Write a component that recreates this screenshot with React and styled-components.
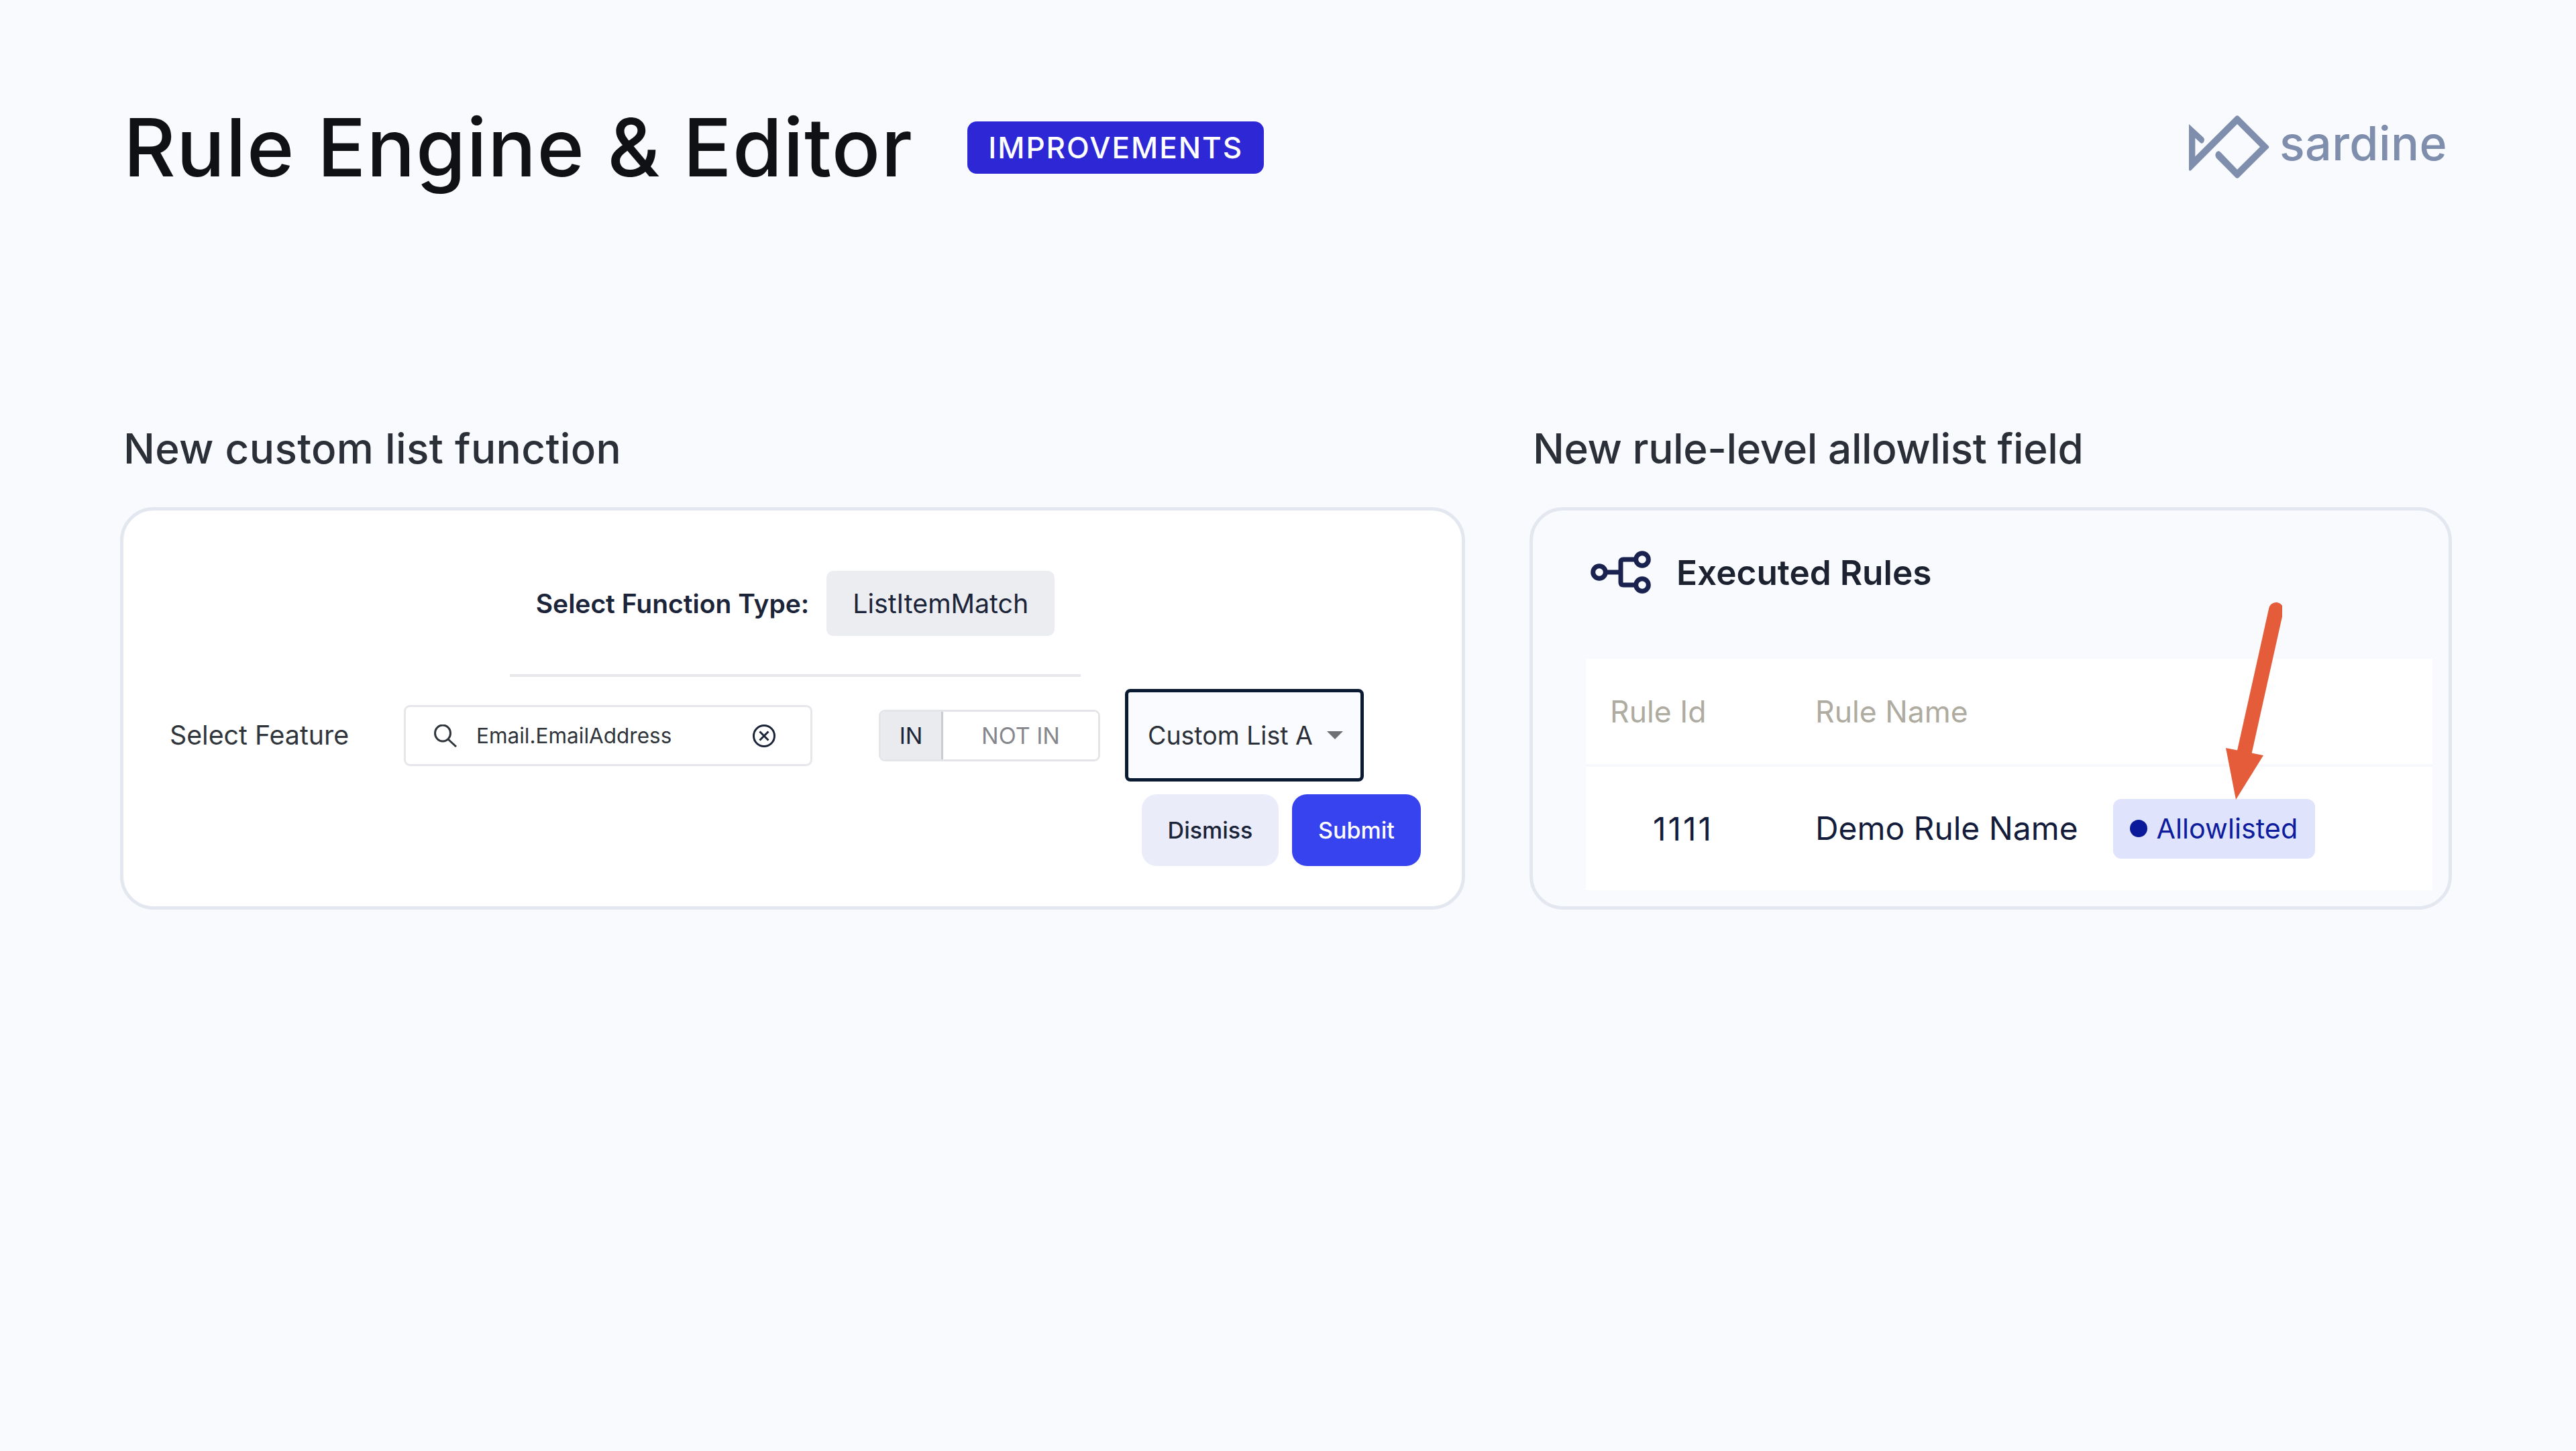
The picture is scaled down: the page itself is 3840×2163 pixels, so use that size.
import React from 'react';
import styled, { createGlobalStyle } from 'styled-components';

const GlobalStyle = createGlobalStyle`
  html, body {
    margin: 0;
    padding: 0;
    background: #f9fafe;
  }
  * {
    box-sizing: border-box;
  }
`;

const Page = styled.div`
  width: 3840px;
  height: 2163px;
  padding: 172px 185px 0 179px;
  background: #f9fafe;
  font-family: Inter, "Liberation Sans", sans-serif;
  color: #141c2e;
`;

const Header = styled.header`
  display: flex;
  align-items: center;
  height: 95px;
`;

const Title = styled.h1`
  margin: 0 0 0 5px;
  font-size: 120px;
  line-height: 95px;
  font-weight: 500;
  letter-spacing: 1.25px;
  color: #0f1114;
  white-space: nowrap;
`;

const Tag = styled.span`
  margin-left: 81px;
  display: flex;
  align-items: center;
  justify-content: center;
  width: 442px;
  height: 78px;
  background: #2e27d6;
  border-radius: 14px;
  color: #fff;
  font-size: 44px;
  font-weight: 500;
  letter-spacing: 2px;
`;

const Logo = styled.div`
  margin-left: auto;
  display: flex;
  align-items: center;
  gap: 9px;
  color: #7e8eac;
`;

const LogoName = styled.span`
  margin-right: 7px;
  padding-bottom: 12px;
  font-size: 70px;
  font-weight: 500;
  letter-spacing: 0.4px;
  line-height: 95px;
`;

const Columns = styled.main`
  margin-top: 364px;
  display: grid;
  grid-template-columns: 2005px 1375px;
  column-gap: 96px;
`;

const Heading = styled.h2`
  margin: 0 0 50px 5px;
  font-size: 62px;
  line-height: 75px;
  font-weight: 500;
  letter-spacing: ${(p) => p.$spacing};
  color: #2a2f38;
  white-space: nowrap;
`;

const Card = styled.section`
  position: relative;
  height: 600px;
  border: 5px solid #e3e7f0;
  border-radius: 50px;
  background: ${(p) => (p.$tinted ? '#f9fafe' : '#fff')};
`;

const FunctionRow = styled.div`
  display: flex;
  align-items: center;
  justify-content: center;
  gap: 26px;
  padding-top: 90px;
  margin-left: 8px;
`;

const BoldLabel = styled.span`
  font-size: 39px;
  font-weight: 600;
  color: #1b2438;
`;

const FunctionValue = styled.span`
  display: flex;
  align-items: center;
  justify-content: center;
  width: 340px;
  height: 97px;
  border-radius: 10px;
  background: #ebedf0;
  font-size: 39.3px;
  color: #1b2438;
`;

const Divider = styled.hr`
  width: 851px;
  height: 4px;
  margin: 57px 0 0 576px;
  border: 0;
  background: #e6e8ec;
`;

const FeatureRow = styled.div`
  display: flex;
  align-items: flex-start;
  padding: 18px 0 0 69px;
`;

const FeatureLabel = styled.span`
  width: 349px;
  padding-top: 45px;
  font-size: 39.3px;
  line-height: 48px;
  color: #30343b;
`;

const SearchBox = styled.div`
  margin-top: 24px;
  display: flex;
  align-items: center;
  width: 609px;
  height: 91px;
  padding: 0 52px 0 42px;
  border: 3px solid #e5e7eb;
  border-radius: 9px;
  font-size: 31.5px;
  color: #30343b;
`;

const SearchText = styled.span`
  margin: 0 auto 0 29px;
`;

const Toggle = styled.div`
  margin: 31px 0 0 99px;
  display: flex;
  width: 330px;
  height: 77px;
  border: 3px solid #e3e5e8;
  border-radius: 9px;
  overflow: hidden;
  font-size: 34px;
`;

const ToggleOption = styled.span`
  display: flex;
  align-items: center;
  justify-content: center;
  width: ${(p) => (p.$active ? '93px' : 'auto')};
  flex: ${(p) => (p.$active ? 'none' : 1)};
  background: ${(p) => (p.$active ? '#e9ebee' : '#fff')};
  border-right: ${(p) => (p.$active ? '3px solid #c9ccd1' : '0')};
  color: ${(p) => (p.$active ? '#1b2438' : '#85878c')};
`;

const Dropdown = styled.div`
  margin-left: 37px;
  display: flex;
  align-items: center;
  gap: 21px;
  width: 356px;
  height: 138px;
  padding-left: 29px;
  border: 5px solid #0a1a33;
  border-radius: 8px;
  background: #fafbfe;
  font-size: 37.5px;
  color: #2a2f38;
  white-space: nowrap;
`;

const Caret = styled.span`
  width: 0;
  height: 0;
  border-left: 12px solid transparent;
  border-right: 12px solid transparent;
  border-top: 12px solid #6e7074;
`;

const Actions = styled.div`
  display: flex;
  justify-content: flex-end;
  gap: 20px;
  margin-top: 19px;
  padding-right: 61px;
`;

const ActionButton = styled.button`
  width: ${(p) => (p.$primary ? '192px' : '204px')};
  height: 107px;
  border: 0;
  border-radius: 22px;
  background: ${(p) => (p.$primary ? '#3843f0' : '#eaecfa')};
  color: ${(p) => (p.$primary ? '#fff' : '#1b2438')};
  font-family: inherit;
  font-size: 34px;
  font-weight: 500;
`;

const RulesHead = styled.div`
  display: flex;
  align-items: center;
  gap: 38px;
  height: 221px;
  padding: 0 0 37px 86px;
`;

const RulesTitle = styled.span`
  font-size: 51.3px;
  font-weight: 600;
  color: #1d2230;
`;

const RulesTable = styled.div`
  margin: 0 24px 0 79px;
  background: #fff;
`;

const TableRow = styled.div`
  display: grid;
  grid-template-columns: 342px 1fr;
  align-items: center;
  height: ${(p) => (p.$head ? '161px' : '184px')};
  border-bottom: ${(p) => (p.$head ? '4px solid #f7f8fc' : '0')};
`;

const HeadCell = styled.span`
  padding-left: ${(p) => (p.$first ? '36px' : '0')};
  font-size: 44.5px;
  color: #aeaba0;
`;

const IdCell = styled.span`
  padding-left: 100px;
  font-size: 48px;
  letter-spacing: 3px;
  color: #141c3c;
`;

const NameCell = styled.span`
  display: flex;
  align-items: center;
  gap: 52px;
  font-size: 47.9px;
  color: #141c3c;
`;

const StatusBadge = styled.span`
  display: flex;
  align-items: center;
  gap: 14px;
  width: 301px;
  height: 89px;
  padding-left: 25px;
  border-radius: 12px;
  background: #e0e3fc;
  color: #0d1d9c;
  font-size: 41.3px;
`;

const Dot = styled.i`
  width: 26px;
  height: 26px;
  border-radius: 50%;
  background: #0a1a9a;
`;

// red pointer lying over the table
const Pointer = styled.svg`
  position: absolute;
  left: 1027px;
  top: 130px;
  width: 90px;
  height: 310px;
`;

function SardineMark() {
  return (
    <svg width="135" height="110" viewBox="0 0 405 330" fill="#7e8eac">
      <path d="M27 60 L92 120 Q100 130 92 142 Q86 150 78 143 L55 122 V205 L236 25 Q243 19 250 25 L382 157 Q388 163 382 168 L250 299 Q243 305 236 299 L150 212 Q141 200 149 187 Q157 176 168 185 L243 263 L345 162 L243 60 L37 266 Q30 272 27 265 Z" />
    </svg>
  );
}

function FlowIcon() {
  return (
    <svg width="90" height="65" viewBox="0 0 90 65" fill="none" stroke="#1a2350" strokeWidth="7">
      <circle cx="13" cy="32" r="9.3" />
      <circle cx="77" cy="13" r="9.3" />
      <circle cx="77" cy="51" r="9.3" />
      <path d="M22 32 H45 M68 13 H49 Q45 13 45 17 V47 Q45 51 49 51 H68" />
    </svg>
  );
}

function SearchIcon() {
  return (
    <svg width="34" height="34" viewBox="0 0 34 34" fill="none" stroke="#30343b" strokeWidth="3">
      <ellipse cx="13" cy="13" rx="11.5" ry="12" />
      <path d="M21 22 L33 33" />
    </svg>
  );
}

function ClearIcon() {
  return (
    <svg width="34" height="34" viewBox="0 0 34 34" fill="none" stroke="#1b2438" strokeWidth="3">
      <circle cx="17" cy="17" r="15.5" />
      <path d="M10.5 10.5 L23.5 23.5 M23.5 10.5 L10.5 23.5" />
    </svg>
  );
}

export default function App() {
  return (
    <Page>
      <GlobalStyle />
      <Header>
        <Title>Rule Engine &amp; Editor</Title>
        <Tag>IMPROVEMENTS</Tag>
        <Logo>
          <SardineMark />
          <LogoName>sardine</LogoName>
        </Logo>
      </Header>
      <Columns>
        <div>
          <Heading $spacing="0.35px">New custom list function</Heading>
          <Card>
            <FunctionRow>
              <BoldLabel>Select Function Type:</BoldLabel>
              <FunctionValue>ListItemMatch</FunctionValue>
            </FunctionRow>
            <Divider />
            <FeatureRow>
              <FeatureLabel>Select Feature</FeatureLabel>
              <SearchBox>
                <SearchIcon />
                <SearchText>Email.EmailAddress</SearchText>
                <ClearIcon />
              </SearchBox>
              <Toggle>
                <ToggleOption $active>IN</ToggleOption>
                <ToggleOption>NOT IN</ToggleOption>
              </Toggle>
              <Dropdown>
                Custom List A
                <Caret />
              </Dropdown>
            </FeatureRow>
            <Actions>
              <ActionButton>Dismiss</ActionButton>
              <ActionButton $primary>Submit</ActionButton>
            </Actions>
          </Card>
        </div>
        <div>
          <Heading $spacing="-0.4px">New rule-level allowlist field</Heading>
          <Card $tinted>
            <RulesHead>
              <FlowIcon />
              <RulesTitle>Executed Rules</RulesTitle>
            </RulesHead>
            <RulesTable>
              <TableRow $head>
                <HeadCell $first>Rule Id</HeadCell>
                <HeadCell>Rule Name</HeadCell>
              </TableRow>
              <TableRow>
                <IdCell>1111</IdCell>
                <NameCell>
                  Demo Rule Name
                  <StatusBadge>
                    <Dot />
                    Allowlisted
                  </StatusBadge>
                </NameCell>
              </TableRow>
            </RulesTable>
            <Pointer viewBox="0 0 90 310">
              <path d="M81 18 L34 229" stroke="#e45c3a" strokeWidth="22" strokeLinecap="round" fill="none" />
              <path d="M6 224 L62 235 L21 301 Z" fill="#e45c3a" />
            </Pointer>
          </Card>
        </div>
      </Columns>
    </Page>
  );
}
